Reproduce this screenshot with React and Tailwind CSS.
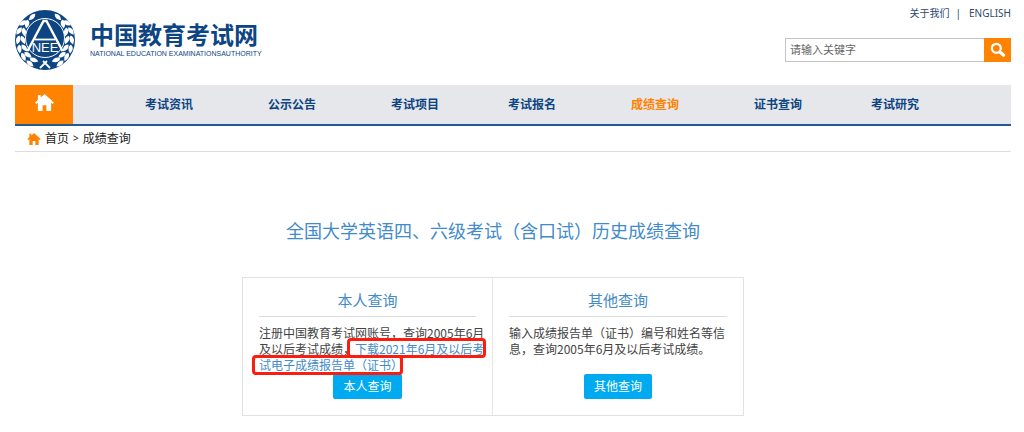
import { useState } from 'react'

const NAV = ['考试资讯', '公示公告', '考试项目', '考试报名', '成绩查询', '证书查询', '考试研究']

// Leaves of the laurel, as [x, y, rotation] for the left branch
const LEAVES = [
  [17, 7, 45], [12, 14, 10], [8, 13, 60], [9, 22, -10], [4, 21, 35],
  [8, 30, -25], [3.2, 30, 15], [9.5, 38, -40], [4.5, 39, -5],
  [13, 45, -55], [8.5, 47, -25], [19, 50, -70], [15, 53.5, -50],
]

function Branch() {
  return (
    <g fill="#fff">
      {LEAVES.map(([x, y, r]) => (
        <path key={`${x}-${y}`} d="M0 -4.6Q4.4 -1 0 4.6Q-4.4 -1 0 -4.6Z" transform={`translate(${x} ${y}) rotate(${r})`} />
      ))}
    </g>
  )
}

function Emblem() {
  return (
    <svg viewBox="0 0 60 60" className="size-[60px] shrink-0" aria-hidden="true">
      <circle cx="30" cy="30" r="30" fill="#0d4583" />
      <Branch />
      <g transform="translate(60 0) scale(-1 1)"><Branch /></g>
      <path d="M25 58L32 51M35 58L28 51" fill="none" stroke="#fff" strokeWidth="1.8" />
      <circle cx="30" cy="28" r="19.5" fill="#0d4583" stroke="#fff" strokeWidth="1" />
      <path d="M12.5 41L28.5 11H31.5L47.5 41" fill="none" stroke="#fff" strokeWidth="2.4" />
      <path d="M20 29.5H40" stroke="#fff" strokeWidth="1.8" />
      <text x="30" y="42" textAnchor="middle" fill="#fff" fontSize="13" fontFamily="Liberation Sans, sans-serif">NEE</text>
    </svg>
  )
}

function HomeIcon({ className }) {
  return (
    <svg viewBox="0 0 20 18" className={className} fill="currentColor" aria-hidden="true">
      <path d="M10 0L20 9L18.6 10.6L17 9.3V18H12V12H8V18H3V9.3L1.4 10.6L0 9L3 6.3V1H6V3.6Z" />
    </svg>
  )
}

function SearchIcon() {
  return (
    <svg viewBox="0 0 16 16" className="size-4" fill="none" stroke="#fff" aria-hidden="true">
      <circle cx="6.3" cy="6.3" r="4.5" strokeWidth="2.2" />
      <path d="M10.2 10.2L13.6 13.2" strokeWidth="3.2" strokeLinecap="round" />
    </svg>
  )
}

function QueryCard({ title, children }) {
  return (
    <section className="flex flex-col items-center px-4 pt-2 pb-4">
      <h2 className="w-full border-b border-[#dcdcdc] pb-0.5 text-center text-[15px] leading-7 text-[#428bca]">{title}</h2>
      <div className="mt-2 w-full">
        <p className="relative -mr-[9px] min-h-12 font-['Noto_Sans_CJK_SC',sans-serif] text-xs leading-4 text-[#444]">{children}</p>
      </div>
      <button type="button" className="mt-px h-[25px] rounded-xs bg-[#00aaf0] px-[10px] text-xs text-white">{title}</button>
    </section>
  )
}

export default function App() {
  const [keyword, setKeyword] = useState('')

  return (
    <div className="bg-white pr-[13px] pb-4 pl-[15px] font-['Noto_Sans','Noto_Sans_CJK_SC',sans-serif]">
      <header className="flex justify-between pb-[15px]">
        <a href="#" className="flex items-center gap-[15px] pt-[10px] text-[#0d4583]">
          <Emblem />
          <span className="flex flex-col">
            <span className="text-2xl leading-7 font-bold">中国教育考试网</span>
            <span className="font-['Liberation_Sans',sans-serif] text-[7px] leading-[10px]">NATIONAL EDUCATION EXAMINATIONSAUTHORITY</span>
          </span>
        </a>
        <div className="flex flex-col items-end pt-[5px]">
          <div className="flex gap-[6px] text-[10px] leading-4 text-[#2b4a6b]">
            <a href="#">关于我们</a>
            <span>|</span>
            <a href="#" className="pl-[2px]">ENGLISH</a>
          </div>
          <form className="mt-[17px] flex h-6" onSubmit={e => e.preventDefault()}>
            <input
              type="text"
              aria-label="关键字"
              value={keyword}
              onChange={e => setKeyword(e.target.value)}
              placeholder="请输入关键字"
              className="w-[199px] border border-r-0 border-[#c4c4c4] px-1 text-[11px] placeholder:text-[#666]"
            />
            <button type="submit" aria-label="搜索" className="flex w-[27px] items-center justify-center bg-[#ff8200]">
              <SearchIcon />
            </button>
          </form>
        </div>
      </header>

      <nav className="flex h-[41px] border-b-2 border-[#235a96] bg-[#e6e7ea]">
        <a href="#" aria-label="首页" className="flex w-[58px] shrink-0 items-center justify-center bg-[#ff8200] pb-1 text-white">
          <HomeIcon className="h-[17px] w-[19px]" />
        </a>
        <div className="ml-[72px] grid flex-1 grid-cols-[123fr_123fr_117fr_123fr_123fr_117fr_140fr] items-center text-xs font-bold text-[#0d4583]">
          {NAV.map(item => (
            <a key={item} href="#" className={item === '成绩查询' ? 'text-[#ff8200]' : ''}>{item}</a>
          ))}
        </div>
      </nav>

      <div className="flex h-[26px] items-center gap-1 border-b border-[#dedede] pl-3 text-xs text-[#222]">
        <HomeIcon className="h-3 w-[14px] text-[#ff8200]" />
        <a href="#">首页</a>
        <span className="text-[10px]">&gt;</span>
        <span>成绩查询</span>
      </div>

      <main className="pt-[65px] pr-10">
        <h1 className="text-center text-lg leading-7 text-[#428bca]">全国大学英语四、六级考试（含口试）历史成绩查询</h1>
        <div className="mx-auto mt-8 grid max-w-[502px] grid-cols-2 divide-x divide-[#e8e8e8] border border-[#e2e2e2]">
          <QueryCard title="本人查询">
            注册中国教育考试网账号，查询2005年6月及以后考试成绩，
            <a href="#" className="text-[#428bca]">下载2021年6月及以后考试电子成绩报告单（证书）</a>
            {/* Marker frames around the two halves of the download link */}
            <span className="absolute top-[13px] left-[88px] h-5 w-[139px] rounded-sm border-3 border-[#fb1d10]" />
            <span className="absolute top-[30px] -left-[7px] h-5 w-[151px] rounded-sm border-3 border-[#fb1d10]" />
          </QueryCard>
          <QueryCard title="其他查询">
            输入成绩报告单（证书）编号和姓名等信息，查询2005年6月及以后考试成绩。
          </QueryCard>
        </div>
      </main>
    </div>
  )
}
